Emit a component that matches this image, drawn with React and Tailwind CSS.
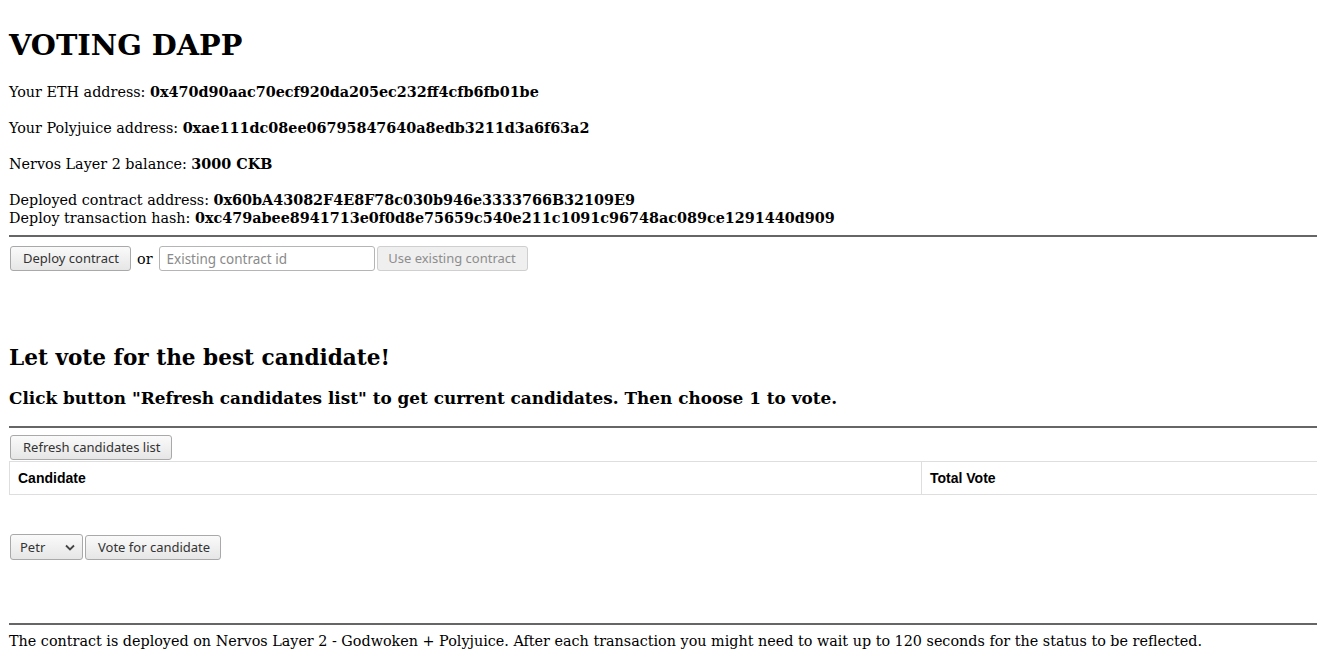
import React from "react";

const btn =
  "h-[25px] px-[12px] rounded-[3px] border border-[#a9a9a9] bg-gradient-to-b from-[#fafafa] to-[#e6e6e6] text-[13px] text-[#333] font-['Noto_Sans',sans-serif] leading-none";

export default function App() {
  return (
    <div className="pl-[9px] font-['DejaVu_Serif',serif] text-[14.35px] text-black leading-[18px] whitespace-nowrap">
      <h1 className="pt-[28px] text-[28.8px] font-bold leading-[34px]">VOTING DAPP</h1>
      <div className="mt-[21px]">
        Your ETH address: <b>0x470d90aac70ecf920da205ec232ff4cfb6fb01be</b>
        <br />
        <br />
        Your Polyjuice address: <b>0xae111dc08ee06795847640a8edb3211d3a6f63a2</b>
        <br />
        <br />
        Nervos Layer 2 balance: <b>3000 CKB</b>
        <br />
        <br />
        Deployed contract address: <b>0x60bA43082F4E8F78c030b946e3333766B32109E9</b>
        <br />
        Deploy transaction hash: <b>0xc479abee8941713e0f0d8e75659c540e211c1091c96748ac089ce1291440d909</b>
      </div>
      <div className="mt-[8px] h-[2px] bg-[#666]" />
      <div className="mt-[9px] flex items-center">
        <button className={`${btn} ml-[1px] w-[121px]`}>Deploy contract</button>
        <span className="ml-[6px] mr-[6px]">or</span>
        <input
          className="h-[25px] w-[216px] rounded-[3px] border border-[#b5b5b5] bg-white px-[7px] text-[13.5px] font-['Noto_Sans',sans-serif] placeholder:text-[#8a8a8a] outline-none"
          placeholder="Existing contract id"
        />
        <button
          disabled
          className="ml-[2px] h-[25px] w-[151px] rounded-[3px] border border-[#cfcfcf] bg-[#efefef] text-[13px] text-[#8d8d8d] font-['Noto_Sans',sans-serif] leading-none"
        >
          Use existing contract
        </button>
      </div>
      <h2 className="mt-[74px] text-[21.6px] font-bold leading-[26px]">Let vote for the best candidate!</h2>
      <h3 className="mt-[17px] text-[16.85px] font-bold leading-[20px]">
        Click button "Refresh candidates list" to get current candidates. Then choose 1 to vote.
      </h3>
      <div className="mt-[18px] h-[2px] bg-[#666]" />
      <div className="mt-[7px] flex">
        <button className={`${btn} ml-[1px] w-[162px]`}>Refresh candidates list</button>
      </div>
      <div className="mt-[1px] flex h-[34px] border-y border-l border-[#dedede] font-['Liberation_Sans',sans-serif] text-[14px] font-bold">
        <div className="flex w-[912px] items-center border-r border-[#dedede] pl-[8px]">Candidate</div>
        <div className="flex flex-1 items-center pl-[8px]">Total Vote</div>
      </div>
      <div className="mt-[39px] flex items-center">
        <div className="relative ml-[1px] flex h-[26px] w-[73px] items-center rounded-[3px] border border-[#a9a9a9] bg-gradient-to-b from-[#fafafa] to-[#e6e6e6] pl-[9px] text-[13px] text-[#333] font-['Noto_Sans',sans-serif]">
          Petr
          <svg className="absolute right-[7px] top-[9px]" width="10" height="7" viewBox="0 0 10 7">
            <path d="M1 1.5 L5 5.5 L9 1.5" fill="none" stroke="#444" strokeWidth="1.8" />
          </svg>
        </div>
        <button className={`${btn} ml-[2px] w-[136px]`}>Vote for candidate</button>
      </div>
      <div className="mt-[63px] h-[2px] bg-[#666]" />
      <div className="mt-[7px]">
        The contract is deployed on Nervos Layer 2 - Godwoken + Polyjuice. After each transaction you might need to wait up to 120 seconds for the status to be reflected.
      </div>
    </div>
  );
}
